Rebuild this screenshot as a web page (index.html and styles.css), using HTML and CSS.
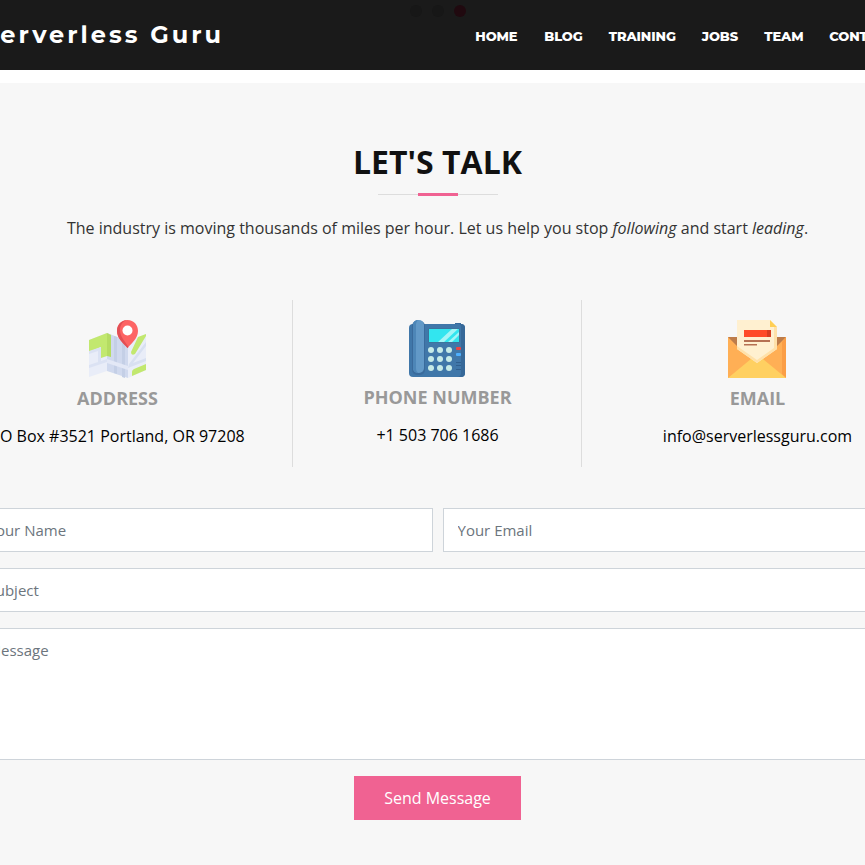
FILE: index.html
```html
<!DOCTYPE html>
<html lang="en">
<head>
<meta charset="utf-8">
<title>Serverless Guru</title>
<link rel="stylesheet" href="styles.css">
</head>
<body>
<header class="header">
  <div class="dots"><i></i><i></i><i class="active"></i></div>
  <a class="logo">Serverless Guru</a>
  <nav class="nav">
    <a class="home">HOME</a><a class="blog">BLOG</a><a class="training">TRAINING</a><a class="jobs">JOBS</a><a class="team">TEAM</a><a class="contact">CONTACT</a>
  </nav>
</header>
<section class="contact-section">
  <div class="heading">
    <h2>LET'S TALK</h2>
    <div class="rule"><span></span></div>
    <p>The industry is moving thousands of miles per hour. Let us help you stop <em>following</em> and start <em>leading</em>.</p>
  </div>
  <div class="info">
    <div class="card">
      <svg width="58" height="58" viewBox="0 0 58 58">
        <path fill="#e9edf8" d="M0 20 18 13v38L0 57z"/>
        <path fill="#c2e86f" d="M0 20 18 13l4 2v22l-4-1-6 2v-11L0 32z"/>
        <path fill="#d0d9ee" d="M18 13 39 21v37L18 51z"/>
        <path fill="#b5dc62" d="M18 13l4 2v22l-4-1z"/>
        <path fill="#c4cfe6" d="M25 16l3 1v37l-3-1zM33 20l3 1v37l-3-1z"/>
        <path fill="#e9edf8" d="M39 21 57 14v36l-18 8z"/>
        <path fill="#c2e86f" d="M49 17l8-3v2L46 34q-4 2-4-2zM43 52q0-2 2-3l12-5v6l-14 6z"/>
        <path fill="#dbe2f3" d="M0 31l12-4v15l-3 1V31l-9 3zM0 45l18-6v3L0 48z"/>
        <path fill="#d8e0f1" d="M40 44 57 22v4L44 43l13-5v3l-18 7z"/>
        <path fill="#e3e8f6" d="M18 39l21 7v4l-21-7z"/>
        <path fill="#fd6464" d="M38.500 0C32 0 28 5 28 11c0 7 6 12 10.500 17C43 23 49 18 49 11 49 5 45 0 38.500 0z"/>
        <path fill="#e24f55" d="M38.500 0C32 0 28 5 28 11c0 7 6 12 10.500 17l1-1C35 20 31 16 31 10c0-5 3-9 7.500-10z"/>
        <circle cx="38.500" cy="10.500" r="5" fill="#fff"/>
      </svg>
      <h3>ADDRESS</h3>
      <p>PO Box #3521 Portland, OR 97208</p>
    </div>
    <div class="card phone">
      <svg width="58" height="58" viewBox="0 0 58 58">
        <path fill="#3a6b9c" d="M47 3h6v3h-6z"/>
        <rect x="1" y="4" width="56" height="53" rx="4" fill="#4077a9"/>
        <path fill="#366898" d="M51 4h2q4 0 4 4v45q0 4-4 4h-4q4 0 4-4V8q0-4-2-4z"/>
        <rect x="4" y="1" width="13" height="54" rx="5" fill="#3a6b9c"/>
        <rect x="5" y="0" width="11" height="53" rx="5" fill="#6299c7"/>
        <path fill="#4d86b7" d="M5 5q0-5 5.500-5-2.500 1-2.500 5v43q0 4 2.500 5Q5 53 5 48z"/>
        <rect x="20.500" y="8.500" width="31" height="14" rx="1" fill="#3a7190"/>
        <rect x="21" y="9" width="30" height="13" fill="#32e5ef"/>
        <path fill="#a3f5f7" d="M44 9h6L36 22h-6zM51 12v3l-7 7h-4z"/>
        <g fill="#c6eae7"><circle cx="23" cy="30" r="3"/><circle cx="32" cy="30" r="3"/><circle cx="41" cy="30" r="3"/><circle cx="23" cy="39" r="3"/><circle cx="32" cy="39" r="3"/><circle cx="41" cy="39" r="3"/><circle cx="23" cy="48" r="3"/><circle cx="32" cy="48" r="3"/><circle cx="41" cy="48" r="3"/></g>
        <rect x="48" y="27" width="5" height="3" rx="1" fill="#ed4545"/>
        <rect x="48" y="33" width="5" height="3" rx="1" fill="#4eb0ff"/>
        <path stroke="#305f8e" d="M48 42.500h5M48 45.500h5M48 49.500h5"/>
      </svg>
      <h3>PHONE NUMBER</h3>
      <p>+1 503 706 1686</p>
    </div>
    <div class="card email">
      <svg width="58" height="58" viewBox="0 0 58 58">
        <path fill="#bd7c4a" d="M0 17h58v18H0z"/>
        <path fill="#ffaf55" d="M0 17 9 26 29 40 49 26 58 17v41H0z"/>
        <path fill="#fb9e46" d="M58 17 54 22v32l4 4z"/>
        <path fill="#ffd061" d="M0 58 29 34 58 58z"/>
        <path fill="#fff0d0" d="M9 0h33l7 7v22L29 43 9 29z"/>
        <path fill="#ffe1a9" d="M46 7h3v22L29 43 9 29v-3l20 14 17-12z"/>
        <path fill="#ffcf55" d="M42 0l7 7h-7z"/>
        <path fill="#ff4b27" d="M16 10h27v7H16z"/>
        <path fill="#d83d20" d="M39 10h4v7h-4z"/>
        <path fill="#b57052" d="M16 20h26v2H16zM16 24h13v1.500H16z"/>
      </svg>
      <h3>EMAIL</h3>
      <p>info@serverlessguru.com</p>
    </div>
  </div>
  <form class="form">
    <div class="row"><input placeholder="Your Name"><input placeholder="Your Email"></div>
    <input placeholder="Subject">
    <textarea placeholder="Message"></textarea>
    <button type="button">Send Message</button>
  </form>
</section>
</body>
</html>
```
FILE: styles.css
```css
* { box-sizing: border-box; }
body { margin: 0; background: #fff; font-family: "Open Sans", sans-serif; font-size: 16px; overflow: hidden; }
.header { position: relative; display: flex; height: 70px; background: #1a1a1a; color: #fff; font-family: Montserrat, Inter, sans-serif; overflow: hidden; }
.dots { position: absolute; top: 5px; left: 410px; display: flex; gap: 10px; }
.dots i { width: 12px; height: 12px; border-radius: 50%; background: #171717; }
.dots .active { background: #20090f; }
.logo { flex: none; display: flex; justify-content: flex-end; width: 224px; margin-right: 251.250px; padding-top: 20px; font-size: 24px; line-height: 30px; font-weight: 700; letter-spacing: 3px; white-space: nowrap; }
.nav { flex: none; display: flex; gap: 26px; padding-top: 27px; font-size: 13px; line-height: 18px; font-weight: 800; letter-spacing: -0.100px; white-space: nowrap; }
.nav a { flex: none; }
.home { width: 43px; }
.blog { width: 38.500px; }
.training { width: 67px; }
.jobs { width: 36.500px; }
.team { width: 39px; }
.contact-section { height: 782px; margin-top: 13px; padding-top: 57px; background: #f7f7f7; overflow: hidden; }
.heading { width: 875px; text-align: center; }
.heading h2 { margin: 0; font-size: 32px; line-height: 44px; font-weight: 700; color: #111; }
.rule { display: flex; align-items: center; justify-content: center; width: 120px; height: 3px; margin: 9px auto 0 378px; background: linear-gradient(#ddd, #ddd) center / 100% 1px no-repeat; }
.rule span { width: 40px; height: 3px; background: #f06292; }
.heading p { margin: 20px 0 0; line-height: 24px; color: #333; }
.info { display: grid; grid-template-columns: 349px 290px 351px; width: 990px; height: 167px; margin: 60px 0 0 -57px; }
.card { display: flex; flex-direction: column; align-items: center; padding-top: 20px; }
.card svg { flex: none; }
.phone { padding-left: 1px; border: solid #ddd; border-width: 0 1px; }
.phone svg { margin-right: 1px; }
.card h3 { margin: 8px 0 0; font-size: 18px; line-height: 25px; font-weight: 700; color: #999; }
.phone h3 { margin-top: 7px; }
.card p { margin: 13px 0 0; line-height: 24px; color: #000; }
.email svg { margin-right: 2px; }
.form { display: flex; flex-direction: column; gap: 16px; width: 930px; margin: 41px 0 0 -27.500px; }
.row { display: flex; gap: 10px; }
input, textarea { display: block; width: 100%; height: 44px; margin: 0; padding: 10px 14px; border: 1px solid #ced4da; border-radius: 0; background: #fff; font: 15px/22px "Open Sans", sans-serif; }
textarea { height: 132px; resize: none; }
::placeholder { color: #6c757d; opacity: 1; }
button { align-self: center; width: 167px; height: 44px; padding: 0; border: 0; background: #f06292; color: #fff; font: 16px/24px "Open Sans", sans-serif; }
```
